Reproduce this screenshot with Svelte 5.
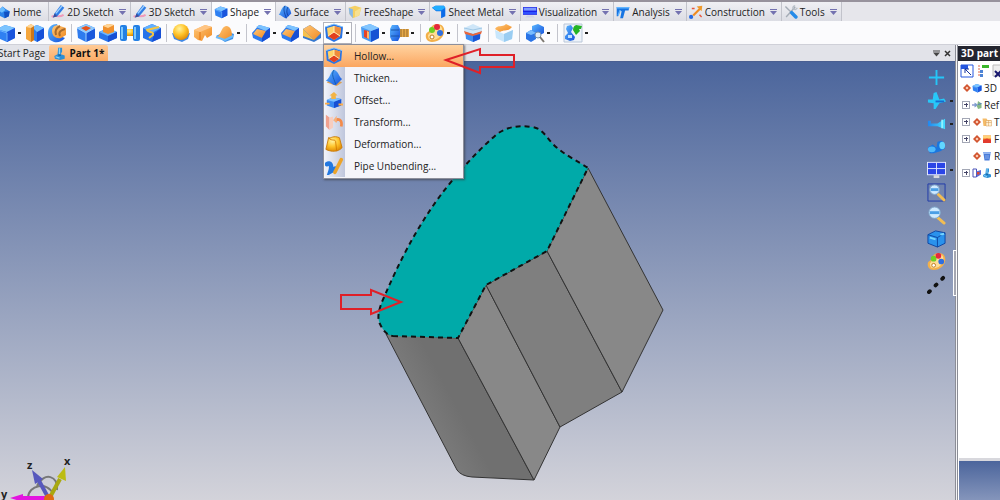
<script lang="ts">
  type Tool = { icon: string; label: string; caret?: boolean; menu?: boolean }

  const tabs = [
    { icon: 'cubes', label: 'Home', caret: false },
    { icon: 'pencil', label: '2D Sketch', caret: true },
    { icon: 'pencil', label: '3D Sketch', caret: true },
    { icon: 'cube', label: 'Shape', caret: true },
    { icon: 'surface', label: 'Surface', caret: true },
    { icon: 'freeshape', label: 'FreeShape', caret: true },
    { icon: 'sheet', label: 'Sheet Metal', caret: true },
    { icon: 'visual', label: 'Visualization', caret: true },
    { icon: 'analysis', label: 'Analysis', caret: true },
    { icon: 'construct', label: 'Construction', caret: true },
    { icon: 'tools', label: 'Tools', caret: true },
  ]

  const groups: Tool[][] = [
    [
      { icon: 'cube', label: 'Extrude', caret: true },
      { icon: 'cut', label: 'Slot' },
      { icon: 'pipe', label: 'Pipe' },
    ],
    [
      { icon: 'pocket', label: 'Pocket' },
      { icon: 'boss', label: 'Boss' },
      { icon: 'spool', label: 'Groove' },
      { icon: 'swept', label: 'Sweep' },
    ],
    [
      { icon: 'sphere', label: 'Sphere' },
      { icon: 'bracket', label: 'Rib' },
      { icon: 'dome', label: 'Dome', caret: true },
    ],
    [
      { icon: 'fillet', label: 'Fillet', caret: true },
      { icon: 'fillet', label: 'Chamfer' },
      { icon: 'draft', label: 'Draft' },
      { icon: 'hollow', label: 'Hollow', caret: true, menu: true },
    ],
    [
      { icon: 'hole', label: 'Drilling', caret: true },
      { icon: 'bolt', label: 'Thread', caret: true },
    ],
    [{ icon: 'palette', label: 'Attributes', caret: true }],
    [{ icon: 'trim', label: 'Trim' }],
    [{ icon: 'sew', label: 'Sew' }],
    [{ icon: 'inspect', label: 'Inspect', caret: true }],
    [{ icon: 'update', label: 'Update', caret: true }],
  ]

  const menuItems = [
    { icon: 'hollow', label: 'Hollow...' },
    { icon: 'thicken', label: 'Thicken...' },
    { icon: 'offset', label: 'Offset...' },
    { icon: 'transform', label: 'Transform...' },
    { icon: 'deform', label: 'Deformation...' },
    { icon: 'unbend', label: 'Pipe Unbending...' },
  ]

  const viewTools: Tool[] = [
    { icon: 'plus', label: 'Pan' },
    { icon: 'plane', label: 'Fly', caret: true },
    { icon: 'lamp', label: 'Light', caret: true },
    { icon: 'binocular', label: 'Look at' },
    { icon: 'screen', label: 'Views', caret: true },
    { icon: 'zoomfit', label: 'Zoom to fit' },
    { icon: 'zoom', label: 'Zoom' },
    { icon: 'wirecube', label: 'Render mode' },
    { icon: 'palette', label: 'Colors' },
    { icon: 'dash', label: 'Line style' },
  ]

  const tree = [
    { icons: ['mark', 'cube'], label: '3D', box: false, indent: false },
    { icons: ['ref'], label: 'Ref', box: true, indent: true },
    { icons: ['mark', 'folder'], label: 'T', box: true, indent: true },
    { icons: ['mark', 'flame'], label: 'F', box: true, indent: true },
    { icons: ['mark', 'bin'], label: 'R', box: false, indent: true },
    { icons: ['shield', 'part'], label: 'P', box: true, indent: true },
  ]

  let active = $state('Shape')
  let menuOpen = $state(true)
  let current = $state('Hollow...')
</script>

{#snippet icon(name: string)}
  <svg class="icon" viewBox="0 0 20 20" aria-hidden="true"><use href="#i-{name}" /></svg>
{/snippet}

<svg class="defs" aria-hidden="true">
  <defs>
    <linearGradient id="blue" x1="0" y1="0" x2="1" y2="1">
      <stop offset="0" stop-color="#5cb8ff" /><stop offset="1" stop-color="#1450dc" />
    </linearGradient>
    <linearGradient id="orange" x1="0" y1="0" x2="1" y2="1">
      <stop offset="0" stop-color="#ffc777" /><stop offset="1" stop-color="#f08a22" />
    </linearGradient>
    <radialGradient id="gold" cx=".4" cy=".3" r=".75">
      <stop offset="0" stop-color="#fff3a0" /><stop offset=".5" stop-color="#ffc52c" /><stop offset="1" stop-color="#dd8500" />
    </radialGradient>
    <linearGradient id="cyan" x1="0" y1="0" x2="1" y2="0">
      <stop offset="0" stop-color="#2285ee" /><stop offset="1" stop-color="#43dcff" />
    </linearGradient>
  </defs>
  <symbol id="i-cube" viewBox="0 0 20 20">
    <path d="M1 6 9 2l10 3v10l-8 4-9-4z" fill="#2f80f2" />
    <path d="M1 6 9 2l10 3-8 4z" fill="#7cc4ff" />
    <path d="m11 9 8-4v10l-8 4z" fill="#1a55dd" />
    <path d="m2 7 9 3v8" stroke="#68b0ff" fill="none" />
  </symbol>
  <symbol id="i-cubes" viewBox="0 0 20 20">
    <path d="m2 8 6-6 5 4 5 3-1 7-6 3-8-4z" fill="#2a82ea" />
    <path d="m2 8 6-6 4 5-5 4z" fill="#6bbcff" />
    <path d="m10 10 8-1-1 7-6 3z" fill="#1150c2" />
  </symbol>
  <symbol id="i-pencil" viewBox="0 0 20 20">
    <path d="M1 17c5-4 9 2 17-3" stroke="#f09aba" stroke-width="3" fill="none" />
    <path d="m5 12 9-12 5 4-10 12-6 2z" fill="#2f7de6" />
    <path d="m7 12 9-11" stroke="#9cd0ff" stroke-width="2" />
    <path d="m5 12 4 4-6 2z" fill="#3c4f98" />
  </symbol>
  <symbol id="i-surface" viewBox="0 0 20 20">
    <path d="M1 14C4 11 5 2 10 1c6 1 8 6 9 11l-7 7c-4 0-6-4-11-5z" fill="url(#blue)" />
    <path d="M10 1c-3 5-1 10 2 18M14 3c-2 5-2 9 1 13" stroke="#0a358f" stroke-width="1" fill="none" />
  </symbol>
  <symbol id="i-freeshape" viewBox="0 0 20 20">
    <path d="M1 4 10 1l9 3-3 11-9 4-5-6z" fill="#f5cf62" />
    <path d="m1 4 6 2v13l-5-6z" fill="#89b9e8" /><path d="m10 9 9-5-3 11-6 2z" fill="#f7e08f" />
  </symbol>
  <symbol id="i-sheet" viewBox="0 0 20 20">
    <path d="m0 4 5-3h12l2 3v12l-6 3V9H6z" fill="#0b6be8" />
    <path d="m0 4 5-3h12l2 3-6 4H6z" fill="#22adff" />
  </symbol>
  <symbol id="i-visual" viewBox="0 0 20 20">
    <path d="M0 3h20v11H0z" fill="#1922e8" /><path d="M1 4h18v4H1z" fill="#7d9bff" />
    <path d="M6 15h8l3 3H3z" fill="#cdd1e8" /><path d="M0 10h20v3H0z" fill="#2f51ff" />
  </symbol>
  <symbol id="i-analysis" viewBox="0 0 20 20">
    <path d="M1 3h18l-1 5h-5l-3 11H6l2-10-2-1-3 8H1z" fill="#1674e2" />
    <path d="M1 4h18M3 15 6 7" stroke="#63b5ff" stroke-width="2" />
  </symbol>
  <symbol id="i-construct" viewBox="0 0 20 20">
    <path d="M6 15 16 5" stroke="#ef8c21" stroke-width="3" />
    <path d="m11 2 8-1-1 8z" fill="#ef9a2c" />
    <path d="M4 5h4M15 14l3 3" stroke="#e7563b" stroke-width="2" />
    <circle cx="3" cy="17" r="3" fill="#266be3" />
  </symbol>
  <symbol id="i-tools" viewBox="0 0 20 20">
    <path d="m3 17 13-14M2 2l9 9" stroke="#a5acb6" stroke-width="2" />
    <path d="M16 1c-4 1-4 4-2 5s4 0 5-2" fill="none" stroke="#b9c0c8" stroke-width="2" />
    <path d="m11 11 6 6" stroke="#268be8" stroke-width="5" stroke-linecap="round" />
  </symbol>
  <symbol id="i-cut" viewBox="0 0 20 20">
    <path d="m5 5 7-3 7 3v10l-7 4-7-4z" fill="#2e7df0" />
    <path d="m12 9 7-4v10l-7 4z" fill="#1550d8" /><path d="m7 4 5-2 7 3-7 4z" fill="#74bdff" />
    <path d="m1 4 5-3 3 2v14l-3 2-5-3z" fill="#f5a63c" /><path d="m6 4 3-1v14l-3 2z" fill="#cd761a" />
    <path d="m1 4 5-3 3 2-3 2z" fill="#ffd697" />
  </symbol>
  <symbol id="i-pipe" viewBox="0 0 20 20">
    <path d="M1 10C1 4 5 1 10 1l2 5-2 6 8 3c-4 5-10 5-13 3-3-1-4-4-4-8z" fill="url(#blue)" />
    <path d="M5 8c0-5 5-7 8-5l6 2v7l-5 3c-5 1-9-2-9-7z" fill="url(#orange)" />
    <path d="M9 12c-2-6 2-8 4-9M13 13c-2-4 1-6 5-7" stroke="#a86a2b" stroke-width="2" fill="none" />
  </symbol>
  <symbol id="i-pocket" viewBox="0 0 20 20">
    <path d="m1 5 9-4 9 4v10l-9 4-8-4z" fill="#2e7bee" /><path d="m1 5 9-4 9 4-9 5z" fill="#8ccaff" />
    <path d="m5 5 5-2 5 2-5 3z" fill="#e6521c" /><path d="m10 10 9-5v10l-9 4z" fill="#1a58dc" />
    <path d="m1 5 9 5v9m0-9 9-5" stroke="#9dd0ff" fill="none" />
  </symbol>
  <symbol id="i-boss" viewBox="0 0 20 20">
    <path d="m1 9 9-4 9 4v6l-9 4-9-4z" fill="#2874ea" /><path d="m1 9 9-4 9 4-9 4z" fill="#6bb6ff" />
    <path d="m10 13 9-4v6l-9 4z" fill="#174fd4" />
    <path d="m5 3 5-2 6 1v7l-6 2-5-2z" fill="#f0902d" /><path d="m5 3 5-2 6 1-6 3z" fill="#ffd597" />
  </symbol>
  <symbol id="i-spool" viewBox="0 0 20 20">
    <path d="M5 6h10v7H5z" fill="url(#gold)" />
    <rect x="0" y="2" width="7" height="16" rx="2" fill="#2480e4" /><rect x="13" y="2" width="7" height="16" rx="2" fill="#2480e4" />
    <path d="M2 4v12M15 4v12" stroke="#7cc8ff" stroke-width="2" />
  </symbol>
  <symbol id="i-swept" viewBox="0 0 20 20">
    <path d="m1 5 9-4 9 4v10l-9 4-9-4z" fill="#2673ea" /><path d="m1 5 9-4 9 4-9 5z" fill="#62b0ff" />
    <path d="m12 11 7-6v10l-9 4z" fill="#174fd4" />
    <path d="M17 4 5 7c1 3 7 1 6 5l-4 3" stroke="#f5c542" stroke-width="2" fill="none" />
  </symbol>
  <symbol id="i-sphere" viewBox="0 0 20 20">
    <path d="m1 10 9 3 9-3-2 6-6 3-8-3z" fill="#4289e6" /><circle cx="10" cy="9" r="8" fill="url(#gold)" />
  </symbol>
  <symbol id="i-bracket" viewBox="0 0 20 20">
    <path d="m1 7 11-5 7 2v8l-5 3-2-3-3 6-4-1-4-3z" fill="url(#orange)" />
    <path d="m1 7 11-5 7 2-12 5z" fill="#ffc584" /><path d="M7 9v8" stroke="#e3730e" />
  </symbol>
  <symbol id="i-dome" viewBox="0 0 20 20">
    <path d="m1 13 10-5 8 3-1 5-8 3z" fill="#3f93e9" />
    <path d="M2 14c4-2 4-10 9-11 5 0 6 6 6 10l-7 4z" fill="url(#orange)" />
    <path d="m1 14 9 3 8-4" stroke="#6dbbf9" fill="none" stroke-width="2" />
  </symbol>
  <symbol id="i-fillet" viewBox="0 0 20 20">
    <path d="m1 10 7-8 11 3v9l-8 5-9-4z" fill="#2e7bee" /><path d="m5 4 4-2 10 3-4 3z" fill="#7cc3ff" />
    <path d="m2 11 4-5 9 2-4 7z" fill="url(#orange)" /><path d="m11 15 4-7 4-3v9l-8 5z" fill="#174fd4" />
  </symbol>
  <symbol id="i-draft" viewBox="0 0 20 20">
    <path d="M1 6 8 2l11 8v5l-7 4-11-4z" fill="#3578cf" /><path d="M1 6 8 2l11 8-7 7z" fill="url(#orange)" />
    <path d="m1 6 11 11-11-4z" fill="#f6c14e" />
  </symbol>
  <symbol id="i-hollow" viewBox="0 0 20 20">
    <path d="m1 4 9-3 9 3-1 11-8 4-8-4z" fill="#2874e6" />
    <path d="m3 5 7-2 7 2-1 8-6 4-6-4z" fill="#ffd269" />
    <path d="m10 3 7 2-1 8-6-4z" fill="#ef8a3a" /><path d="m4 13 6-4 6 4-6 4z" fill="#e2401f" />
    <path d="M10 3v6l-6 4m6-4 6 4" stroke="#fff0b8" fill="none" />
    <path d="m1 4 9-3 9 3" stroke="#8bc9ff" fill="none" />
  </symbol>
  <symbol id="i-hole" viewBox="0 0 20 20">
    <path d="m1 4 9-3 9 4v10l-8 4-9-4z" fill="#4a9cf3" /><path d="m11 8 8-3v10l-8 4z" fill="#1652d4" />
    <path d="m1 4 9-3 9 4-8 3z" fill="#83c6ff" />
    <path d="m4 7 5 1v8l-5-2z" fill="#e64328" /><path d="m7 8 2 1v7l-2-1z" fill="#ffb56a" />
  </symbol>
  <symbol id="i-bolt" viewBox="0 0 20 20">
    <path d="M9 6h11v8H9z" fill="#e5a949" /><path d="M12 6v8M15 6v8M18 6v8" stroke="#9a6a28" />
    <path d="M3 2h6l2 4v8l-2 4H3l-2-4V6z" fill="url(#blue)" /><path d="M2 7h8M2 13h8" stroke="#1a55a8" />
  </symbol>
  <symbol id="i-palette" viewBox="0 0 20 20">
    <path d="M12 1c6 0 8 4 7 9s-6 9-12 9c-5 0-7-4-6-8 1-2 3-2 4-4 1-4 4-6 7-6z" fill="#f3b04a" />
    <path d="M12 2c4 0 6 3 5 7-1 5-5 8-10 8-3 0-4-2-4-5 3-2 3-9 9-10z" fill="#ffdc94" />
    <circle cx="7" cy="7" r="3" fill="#6fcf24" /><circle cx="12" cy="4" r="3" fill="#e4283d" />
    <circle cx="15" cy="10" r="3" fill="#2f6fe0" /><circle cx="7" cy="14" r="2" fill="#fff" stroke="#bd7a20" />
  </symbol>
  <symbol id="i-trim" viewBox="0 0 20 20">
    <path d="m2 6 8-4 8 4-1 10-7 3-7-3z" fill="#3f8df0" /><path d="m1 5 9-4 9 4v4l-9 2-9-2z" fill="#cfe6f8" />
    <path d="m1 8 9 3 9-3-1 3-8 2-8-2z" fill="#e7653c" /><path d="m10 13 7-2v5l-7 3z" fill="#1a55d4" />
    <path d="m1 5 9 2 9-2" stroke="#9fc7e6" fill="none" />
  </symbol>
  <symbol id="i-sew" viewBox="0 0 20 20">
    <path d="m1 7 9 4 9-4-1 9-8 3-8-4z" fill="#c8e6fb" /><path d="m10 11 9-4-1 9-8 3z" fill="#9acdf2" />
    <path d="M1 6c3-5 7-1 11-5l6 3c-4 5-8 2-12 5z" fill="url(#orange)" />
  </symbol>
  <symbol id="i-inspect" viewBox="0 0 20 20">
    <path d="m7 3 6-2 6 3v6l-6 3-6-3z" fill="url(#blue)" /><path d="m1 10 5-3 5 3v6l-5 3-5-3z" fill="#2a74e6" />
    <path d="m1 10 5-3 5 3-5 2z" fill="#78bcff" />
    <circle cx="13" cy="12" r="3" fill="#dceaf8" stroke="#7390ae" /><path d="m15 14 4 5" stroke="#7c7770" stroke-width="2" />
  </symbol>
  <symbol id="i-update" viewBox="0 0 20 20">
    <path d="M1 1h18v18H1z" fill="#eef3fa" stroke="#b9c6d8" />
    <path d="m4 3 4-1 2 3-2 4 4 5-1 3-4 1-5-2v-3l3-3-2-4z" fill="url(#blue)" />
    <path d="M5 12h4v3H5z" fill="#bfe0ff" />
    <path d="M10 8c0-4 1-5 3-6l6 1-1 3h-2l1 2-4 4-3-5z" fill="#24b426" />
  </symbol>
  <symbol id="i-thicken" viewBox="0 0 20 20">
    <path d="m2 15 3-3 12 2 2 1-6 4z" fill="#dda052" />
    <path d="M1 13C6 10 6 2 10 1c5 1 5 7 9 10l-7 7c-4 0-6-4-11-5z" fill="url(#blue)" />
    <path d="M10 1c-3 5-1 8 2 16" stroke="#145cab" fill="none" />
  </symbol>
  <symbol id="i-offset" viewBox="0 0 20 20">
    <path d="m2 10 7-3 9 2v7l-8 3-8-3z" fill="#3a89f2" /><path d="m10 12 8-3v7l-8 3z" fill="#174fd4" />
    <path d="m2 10 7-3 9 2-8 3z" fill="#7bbfff" />
    <path d="M7 9V5H5l5-4 4 4h-2v4z" fill="#f3b445" /><path d="M0 14h5M15 15h5" stroke="#ffad45" stroke-width="2" />
  </symbol>
  <symbol id="i-transform" viewBox="0 0 20 20">
    <path d="m1 2 4 3v14l-4-4z" fill="#f0a18e" /><path d="m5 5 4-1v12l-4 3z" fill="#f7cdbf" />
    <path d="M18 15c1-4 0-8-4-8l-3 2" stroke="#f48b4a" stroke-width="3" fill="none" />
    <path d="m9 8 4-5v8z" fill="#f7b07c" />
  </symbol>
  <symbol id="i-deform" viewBox="0 0 20 20">
    <path d="M4 3c3 1 5-3 12 0l3 11c-4 5-12 5-18 2z" fill="url(#gold)" stroke="#c87a0a" />
    <path d="M4 3c4 5 8 0 8 6l1 9" stroke="#d47b00" fill="none" />
  </symbol>
  <symbol id="i-unbend" viewBox="0 0 20 20">
    <path d="M2 8c4-3 6 2 4 8l5-3" stroke="#2378e0" stroke-width="5" stroke-linecap="round" fill="none" />
    <path d="m11 17 7-14" stroke="#eda42a" stroke-width="4" stroke-linecap="round" />
  </symbol>
  <symbol id="i-plus" viewBox="0 0 20 20"><path d="M10 2v16M2 10h16" stroke="#25c5f7" stroke-width="2" /></symbol>
  <symbol id="i-plane" viewBox="0 0 20 20">
    <path d="M1 9h5L7 2l3-1 3 8 5-1 2 3-7 2-4 6H7V13l-6-1z" fill="#27c8f8" /><path d="M9 11h9" stroke="#176bd0" stroke-width="2" />
  </symbol>
  <symbol id="i-lamp" viewBox="0 0 20 20">
    <path d="M1 7h3v3h7l8-5v11l-8-3H1z" fill="url(#cyan)" /><path d="M16 6v9" stroke="#8ff0ff" stroke-width="2" />
  </symbol>
  <symbol id="i-binocular" viewBox="0 0 20 20">
    <path d="m1 11 5-3 4 3 1-6 5-1 3 8-5 3-7 2H3z" fill="#1976df" />
    <ellipse cx="5" cy="13" rx="4" ry="3" fill="#4fb9fa" /><ellipse cx="16" cy="9" rx="3" ry="4" fill="#61d7ff" />
  </symbol>
  <symbol id="i-screen" viewBox="0 0 20 20">
    <path d="M0 2h20v14H0z" fill="#e7ecff" /><path d="M1 3h18v12H1z" fill="#2a45e6" />
    <path d="M10 3v12M1 9h18" stroke="#dce6ff" /><path d="M7 16h6v3H7z" fill="#d6d8dd" />
  </symbol>
  <symbol id="i-zoom" viewBox="0 0 20 20">
    <path d="m11 12 7 6" stroke="#f2bd52" stroke-width="3" stroke-linecap="round" />
    <circle cx="8" cy="7" r="6" fill="#cfeaff" stroke="#7fa8ca" /><path d="M3 7h10" stroke="#4b9fe5" stroke-width="3" />
  </symbol>
  <symbol id="i-zoomfit" viewBox="0 0 20 20">
    <path d="M1 1h18v18H1z" fill="none" stroke="#203aa9" />
    <path d="m12 12 6 6" stroke="#f2bd52" stroke-width="3" stroke-linecap="round" />
    <circle cx="8" cy="7" r="5" fill="#cfeaff" stroke="#7fa8ca" /><path d="M4 7h8" stroke="#4b9fe5" stroke-width="3" />
  </symbol>
  <symbol id="i-wirecube" viewBox="0 0 20 20">
    <path d="m1 6 8-4 10 2v11l-8 4-10-4z" fill="#2a92ec" stroke="#0e47a3" />
    <path d="m1 6 10 3 8-5M11 9v10" stroke="#0e47a3" fill="none" /><path d="m3 9 6 2M14 6l4-1" stroke="#76d5ff" stroke-width="2" />
  </symbol>
  <symbol id="i-dash" viewBox="0 0 20 20">
    <path d="m2 18 1-1m6-6 1-1m6-6 1-1" stroke="#111" stroke-width="4" stroke-linecap="round" />
  </symbol>
  <symbol id="i-mark" viewBox="0 0 20 20">
    <path d="m10 2 8 8-8 8-8-8z" fill="#d2552f" /><path d="m10 7 3 3-3 3-3-3z" fill="#ffd9c4" />
  </symbol>
  <symbol id="i-ref" viewBox="0 0 20 20">
    <path d="M0 10h7" stroke="#8e9bd0" stroke-width="3" /><path d="m5 5 8 5-8 5z" fill="#7f9ed0" />
    <path d="m12 2 7 5v9l-7 2-2-5z" fill="#86b886" /><path d="m12 9 7-2" stroke="#557cc0" stroke-width="2" />
  </symbol>
  <symbol id="i-folder" viewBox="0 0 20 20">
    <path d="M1 3h8l2 3h7v12H3z" fill="#f5bc69" /><path d="M8 7h11v11H8z" fill="#fff0d2" stroke="#d59b55" /><path d="M8 11h11M13 7v11" stroke="#d59b55" />
  </symbol>
  <symbol id="i-flame" viewBox="0 0 20 20">
    <path d="M2 3h16v15H2z" fill="#f7791f" /><path d="M2 3h16v6H2z" fill="#ffd27a" /><path d="m2 12 8-3 8 3v6H2z" fill="#e23b2e" />
  </symbol>
  <symbol id="i-bin" viewBox="0 0 20 20">
    <path d="M3 5h14l-2 14H5z" fill="#4a7cd9" /><path d="M2 2h16v3H2z" fill="#89aef0" /><path d="M8 8v8m4-8v8" stroke="#c6daff" />
  </symbol>
  <symbol id="i-shield" viewBox="0 0 20 20">
    <path d="M2 2h7v16H2z" fill="#fff" stroke="#4a52b8" stroke-width="2" /><path d="m8 7 10-3v9l-8 5z" fill="#5a6ad6" /><path d="M10 8h5v5h-5z" fill="#de4a32" />
  </symbol>
  <symbol id="i-part" viewBox="0 0 20 20">
    <path d="M8 1h6v6l-2 4 6 2v5l-7 2-8-2-1-4 5-3z" fill="#2d8fd6" />
    <path d="M10 2v9M4 15l6 2" stroke="#8dd4fa" stroke-width="2" /><path d="m8 12 4 1" stroke="#17609e" stroke-width="2" />
  </symbol>
</svg>

<div class="app">
  <div class="tabs" role="tablist">
    {#each tabs as tab}
      <button
        class="tab"
        class:active={active === tab.label}
        role="tab"
        aria-selected={active === tab.label}
        onclick={() => (active = tab.label)}
      >
        {@render icon(tab.icon)}
        <span>{tab.label}</span>
        {#if tab.caret}
          <svg class="chevron" viewBox="0 0 14 12" aria-hidden="true"><path d="M0 0h14v2H0zM0 4h14l-7 8z" /></svg>
        {/if}
      </button>
    {/each}
  </div>

  <div class="toolbar">
    {#each groups as group}
      <div class="group">
        {#each group as tool}
          {#if tool.menu}
            <div class="dropdown">
              <button class="tool open" aria-label={tool.label} aria-expanded={menuOpen} onclick={() => (menuOpen = !menuOpen)}>
                {@render icon(tool.icon)}<i class="dot"></i>
              </button>
              {#if menuOpen}
                <div class="menu" role="menu">
                  {#each menuItems as item}
                    <button
                      class="item"
                      class:current={current === item.label}
                      role="menuitem"
                      onmouseenter={() => (current = item.label)}
                    >
                      <span class="strip">{@render icon(item.icon)}</span>
                      <span>{item.label}</span>
                    </button>
                  {/each}
                </div>
                <svg class="pointer" viewBox="0 0 74 30" aria-hidden="true">
                  <path d="M3 14 37 3v6h34v12H37v6z" />
                </svg>
              {/if}
            </div>
          {:else}
            <button class="tool" aria-label={tool.label}>
              {@render icon(tool.icon)}{#if tool.caret}<i class="dot"></i>{/if}
            </button>
          {/if}
        {/each}
      </div>
    {/each}
  </div>

  <div class="work">
    <main class="document">
      <div class="doctabs">
        <button class="doctab start">Start Page</button>
        <button class="doctab selected">{@render icon('part')}<span>Part 1*</span></button>
        <span class="fill"></span>
        <button class="small" aria-label="Document list">
          <svg viewBox="0 0 14 14"><path d="M0 1h14v2H0zM0 5h14l-7 8z" /></svg>
        </button>
        <button class="small" aria-label="Close">
          <svg viewBox="0 0 14 14"><path d="m2 2 10 10m0-10L2 12" stroke="#333" stroke-width="3" /></svg>
        </button>
      </div>

      <div class="view">
        <svg class="model" viewBox="0 62 955 438" role="img" aria-label="Part 1">
          <defs>
            <linearGradient id="side" x1="420" y1="410" x2="450" y2="394" gradientUnits="userSpaceOnUse">
              <stop offset="0" stop-color="#7b7b7b" /><stop offset="1" stop-color="#707070" />
            </linearGradient>
          </defs>
          <g class="faces">
            <path d="M386 334 458 338 534 480 472 477Q461 476 457 470Z" fill="url(#side)" />
            <path d="m458 338 28-53 74 142-26 53z" fill="#888" />
            <path d="m486 285 61-34 75 141-62 35z" fill="#7f7f7f" />
            <path d="m547 251 41-83 75 142-41 82z" fill="#888" />
          </g>
          <path
            class="top"
            d="M393 336 458 338 486 285 547 251 588 168C578 161 562 154 552 143C545 135 541 128 532 127C518 125 507 127 497 134C475 153 455 176 440 196C415 230 398 265 385 295C378 310 377 318 380 324Q385 335 393 336Z"
          />
          <path class="red" d="M341 295h30v-5l30 12-30 12v-5h-30z" />
        </svg>

        <svg class="triad" viewBox="0 0 90 60" aria-hidden="true">
          <path d="M28 58c0-13 20-17 25-4M37 46c7-15 22-10 20 4" fill="none" stroke="#777" stroke-width="2" />
          <path d="M49 59 38 39" stroke="#5758bd" stroke-width="4" /><path d="m32 30 11 9-8 5z" fill="#5758bd" />
          <path d="m49 59 11-20" stroke="#a8a810" stroke-width="4" /><path d="m65 27 1 14-9-4z" fill="#bcbc13" />
          <path d="M48 58H20" stroke="#e315df" stroke-width="4" /><path d="m10 58 13-4v8z" fill="#e315df" />
          <circle cx="49" cy="59" r="5" fill="#e06b12" />
          <text x="64" y="25">x</text><text x="27" y="29">z</text><text x="1" y="58">y</text>
        </svg>

        <div class="viewtools">
          {#each viewTools as tool}
            <button class="viewtool" aria-label={tool.label}>
              {@render icon(tool.icon)}{#if tool.caret}<i class="dot"></i>{/if}
            </button>
          {/each}
        </div>
      </div>
    </main>

    <div class="splitter"><span></span></div>

    <aside>
      <h2>3D part</h2>
      <div class="treetools">
        <button aria-label="Select">
          <svg viewBox="0 0 14 14"><path d="M1 1h12v12H1z" fill="#fff" stroke="#2456df" /><path d="M1 1h7v4H1z" fill="#2456df" /><path d="m5 5 6 6M5 9V5h4" stroke="#16339c" fill="none" /></svg>
        </button>
        <button aria-label="Expand">
          <svg viewBox="0 0 14 14"><path d="M3 1v12" stroke="#e26848" stroke-dasharray="2 1" /><path d="M6 1h7v3H6z" fill="#39b62b" /><path d="M4 6h3v3H4zM4 10h3v3H4z" fill="#4d83d5" /></svg>
        </button>
        <button aria-label="Delete">
          <svg viewBox="0 0 14 14"><path d="M1 1h10v11H1z" fill="#eee" stroke="#bbb" /><path d="m3 7 6 6m0-6-6 6" stroke="#18186e" stroke-width="2" /></svg>
        </button>
      </div>
      <ul>
        {#each tree as node}
          <li>
            {#if node.indent}<span class="knot" class:box={node.box}></span>{/if}
            {#each node.icons as name}{@render icon(name)}{/each}
            <span>{node.label}</span>
          </li>
        {/each}
      </ul>
      <div class="preview"></div>
    </aside>
  </div>
</div>

<style>
  :global(body) {
    margin: 0;
  }
  .app {
    display: flex;
    flex-direction: column;
    height: 100vh;
    overflow: hidden;
    font: 10px/16px 'Open Sans', 'Noto Sans', sans-serif;
    color: #222;
    background: #e3e4ea;
  }
  .defs {
    position: absolute;
    width: 0;
    height: 0;
  }
  button {
    display: flex;
    align-items: center;
    flex: none;
    margin: 0;
    padding: 0;
    border: 0;
    background: none;
    color: inherit;
    font: inherit;
    white-space: nowrap;
  }
  .icon {
    flex: none;
    width: 18px;
    height: 18px;
  }
  .dot {
    width: 3px;
    height: 2px;
    background: #222;
  }

  .tabs {
    display: flex;
    flex: none;
    height: 19px;
    border-top: 2px solid #97929c;
    background: #e6e6eb;
  }
  .tab {
    gap: 2px;
    padding: 0 4px 0 2px;
    border-right: 1px solid #c2c3cb;
    background: linear-gradient(#f0f0f4, #dcdde4);
  }
  .tab:first-child {
    margin-left: -5px;
    padding-right: 7px;
  }
  .tab.active {
    background: #fbfbfd;
  }
  .tab .icon {
    width: 14px;
    height: 14px;
  }
  .chevron {
    width: 7px;
    height: 6px;
    margin-left: 3px;
    fill: #7472b0;
  }

  .toolbar {
    display: flex;
    flex: none;
    height: 23px;
    border-bottom: 1px solid #cfd0d8;
    background: #fbfbfd;
  }
  .group {
    display: flex;
    align-items: center;
  }
  .group:first-child {
    margin-left: -5px;
  }
  .group + .group::before {
    content: '';
    width: 1px;
    height: 18px;
    margin: 0 3px;
    background: #c3c4cc;
  }
  .group:nth-child(n + 7)::before {
    margin: 0 4px;
  }
  .tool {
    height: 22px;
    padding: 0 1px;
  }
  .tool .icon {
    width: 20px;
    height: 20px;
  }
  .tool .dot {
    margin: 0 2px;
  }
  .dropdown {
    position: relative;
    z-index: 2;
  }
  .tool.open {
    outline: 1px solid #b3b4bd;
    outline-offset: -1px;
    background: #fff;
  }
  .menu {
    position: absolute;
    top: 100%;
    left: 0;
    width: 139px;
    padding-bottom: 1px;
    border: 1px solid #8d8f9b;
    background: #f5f5fa;
    box-shadow: 1px 1px 2px #3339;
  }
  .item {
    gap: 9px;
    width: 100%;
    height: 22px;
  }
  .item.current {
    background: linear-gradient(#ffd3a0, #fba660);
  }
  .strip {
    display: flex;
    align-items: center;
    width: 21px;
    height: 22px;
    padding-left: 1px;
    box-sizing: border-box;
    background: linear-gradient(90deg, #f2f4fb, #bfc6dc);
  }
  .current .strip {
    background: none;
  }
  .pointer {
    position: absolute;
    top: 24px;
    left: 120px;
    width: 74px;
    height: 30px;
  }
  .pointer path,
  .red {
    fill: none;
    stroke: #df2028;
    stroke-width: 2;
  }

  .work {
    display: flex;
    flex: 1;
    min-height: 0;
  }
  .document {
    display: flex;
    flex: 1;
    flex-direction: column;
    min-width: 0;
  }
  .doctabs {
    display: flex;
    flex: none;
    align-items: stretch;
    height: 16px;
    padding-right: 2px;
    border-bottom: 1px solid #4a5f92;
    background: #e2e3e9;
  }
  .doctab {
    height: 16px;
    padding: 0 4px;
  }
  .doctab.start {
    padding-left: 0;
    margin-left: -2px;
  }
  .doctab.selected {
    gap: 3px;
    border-radius: 2px 2px 0 0;
    background: linear-gradient(#ffcb97, #fbac66);
    color: #111;
    font-weight: 700;
  }
  .doctab .icon {
    width: 13px;
    height: 13px;
  }
  .fill {
    flex: 1;
  }
  .small {
    padding: 0 2px;
  }
  .small svg {
    width: 7px;
    height: 7px;
    fill: #444;
  }

  .view {
    position: relative;
    flex: 1;
    min-height: 0;
    background: linear-gradient(#4b659c, #d3d3da);
  }
  .model {
    display: block;
    width: 100%;
    height: 100%;
  }
  .faces path {
    stroke: #333;
    stroke-width: 1;
    stroke-linejoin: round;
  }
  .top {
    fill: #00aaa9;
    stroke: #111;
    stroke-width: 2;
    stroke-dasharray: 5 4;
  }
  .triad {
    position: absolute;
    bottom: 0;
    left: 0;
    width: 90px;
    height: 60px;
  }
  .triad text {
    font: 700 11px 'Open Sans', sans-serif;
    fill: #222;
  }
  .viewtools {
    position: absolute;
    top: 4px;
    right: 1px;
    display: flex;
    flex-direction: column;
  }
  .viewtool {
    gap: 4px;
    width: 27px;
    height: 23px;
  }
  .viewtool .icon {
    width: 19px;
    height: 19px;
  }

  .splitter {
    display: flex;
    flex: none;
    align-items: center;
    width: 1px;
    border: solid #8b8d96;
    border-width: 0 1px;
    background: #f4f4f7;
  }
  .splitter span {
    z-index: 1;
    flex: none;
    width: 2px;
    height: 44px;
    margin-left: -3px;
    border: 1px solid #fff;
    background: #a5a7b1;
  }

  aside {
    display: flex;
    flex: none;
    flex-direction: column;
    width: 42px;
    overflow: hidden;
    background: #fff;
  }
  h2 {
    flex: none;
    height: 15px;
    margin: 1px 0 0;
    padding-left: 3px;
    background: #23252f;
    color: #fff;
    font-size: 10px;
    line-height: 15px;
    white-space: nowrap;
  }
  .treetools {
    display: flex;
    flex: none;
    gap: 2px;
    padding: 3px 2px 1px;
  }
  .treetools svg {
    width: 14px;
    height: 14px;
  }
  ul {
    flex: 1;
    margin: 0;
    padding: 0 0 0 4px;
    list-style: none;
  }
  li {
    display: flex;
    align-items: center;
    height: 17px;
    white-space: nowrap;
  }
  li .icon {
    width: 10px;
    height: 10px;
  }
  li span:last-child {
    margin-left: 2px;
  }
  .knot {
    flex: none;
    box-sizing: border-box;
    width: 8px;
    height: 8px;
    margin-right: 2px;
  }
  .knot.box {
    border: 1px solid #a3a7b5;
    background:
      linear-gradient(#446, #446) center / 4px 1px no-repeat,
      linear-gradient(#446, #446) center / 1px 4px no-repeat;
  }
  .preview {
    flex: none;
    height: 39px;
    margin-left: 1px;
    border-top: 3px solid #d8d8dd;
    background: linear-gradient(#4b659c, #8595bb);
  }
</style>
